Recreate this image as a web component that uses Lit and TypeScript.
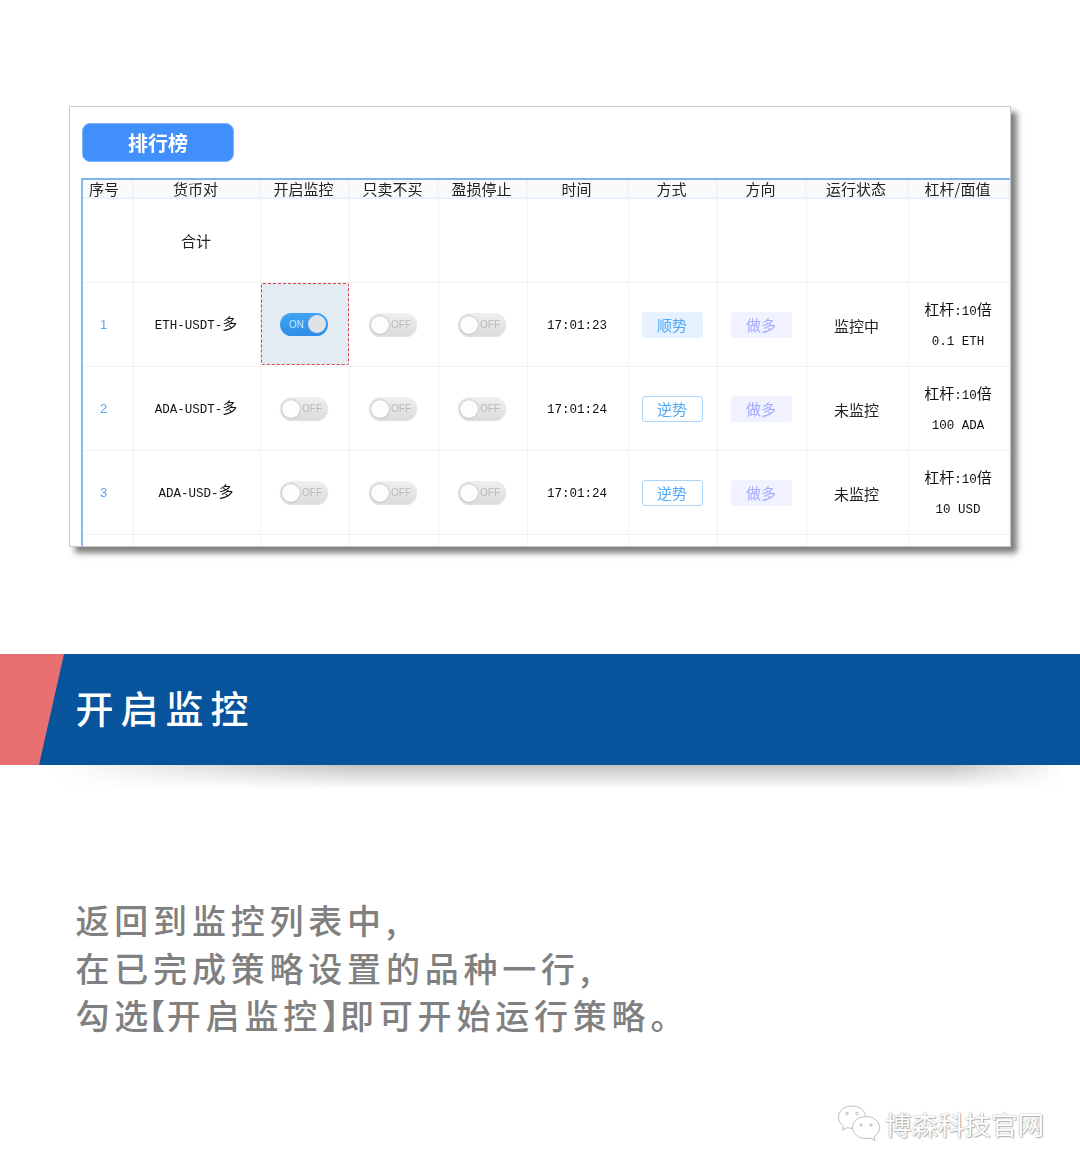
import { LitElement, html, css } from "lit";
import { customElement } from "lit/decorators.js";

const heads = ["序号", "货币对", "开启监控", "只卖不买", "盈损停止", "时间", "方式", "方向", "运行状态", "杠杆/面值"];
const rows = [
  { n: "1", pair: "ETH-USDT", on: true, time: "17:01:23", mode: "顺势", solid: true, state: "监控中", amount: "0.1 ETH" },
  { n: "2", pair: "ADA-USDT", on: false, time: "17:01:24", mode: "逆势", solid: false, state: "未监控", amount: "100 ADA" },
  { n: "3", pair: "ADA-USD", on: false, time: "17:01:24", mode: "逆势", solid: false, state: "未监控", amount: "10 USD" },
];

@customElement("app-root")
export class AppRoot extends LitElement {
  static styles = css`
    :host { display: block; width: 1080px; height: 1174px; overflow: hidden; background: #fff; padding-top: 106px; box-sizing: border-box; font-family: "Noto Sans CJK SC", "Liberation Sans", sans-serif; }
    .card { box-sizing: border-box; margin-left: 69px; width: 942px; height: 441px; border: 1px solid #c9c9c9; background: #fff; box-shadow: 6px 6px 6px #7d7d7d; overflow: hidden; padding: 16px 0 0 11px; }
    .inner { filter: blur(0.55px); }
    .btn { margin-left: 1px; width: 152px; height: 39px; border-radius: 8px; background: #418ffb; border: 1px solid #7fb3fa; box-sizing: border-box; color: #fff; font-size: 20px; font-weight: 700; display: flex; align-items: center; justify-content: center; }
    .table { margin-top: 16px; border-left: 2px solid #86bbf3; border-top: 2px solid #7fb5ef; }
    .row { display: grid; grid-template-columns: 51px 127px 89px 89px 89px 101px 89px 89px 102px 101px; height: 84px; border-bottom: 1px solid #f0f2f5; box-sizing: border-box; }
    .row.head { height: 19px; background: #fafafa; border-bottom: 2px solid #e9f2fb; font-size: 15px; color: #222; }
    .row.head .cell { border-right: 2px solid #eef4fb; line-height: 18px; padding-top: 0; }
    .row.head .cell:first-child { padding-right: 7px; }
    .row.blank { height: 12px; border-bottom: 0; }
    .cell { border-right: 1px solid #f0f2f5; box-sizing: border-box; display: flex; flex-direction: column; align-items: center; justify-content: center; font-size: 15px; color: #222; white-space: nowrap; min-width: 0; padding: 2px 2px 0 0; }
    .total { padding-bottom: 2px; }
    .num { color: #5aa5f5; font: 13px "Liberation Sans", sans-serif; padding: 0 7px 3px 0; }
    .mono { font-family: "Liberation Mono", monospace; font-size: 12.5px; color: #111; }
    .shift { padding-bottom: 7px; }
    .cjk { font-family: "Noto Sans CJK SC", sans-serif; font-size: 15px; }
    .hl { background: #e3ebf3; border: 1.5px dashed #e2434a; border-radius: 2px; margin: 0 1px 1px 0; }
    .sw { width: 48px; height: 23px; border-radius: 12px; position: relative; box-sizing: border-box; font: 10px "Liberation Sans", sans-serif; display: flex; align-items: center; margin-bottom: 2px; }
    .sw.off { background: linear-gradient(#efefef, #dcdcdc); color: #b9b9b9; padding-left: 22px; box-shadow: 0 1px 1px #ddd; }
    .sw.on { background: linear-gradient(#3da4f2, #2f8de8); color: #cfe8fb; padding-left: 9px; }
    .knob { position: absolute; top: 2.500px; width: 18px; height: 18px; border-radius: 50%; }
    .off .knob { left: 2px; background: #fdfdfd; box-shadow: 0 0 2px #999; }
    .on .knob { right: 2px; background: #dfe3e8; }
    .tag { width: 61px; height: 26px; border-radius: 3px; display: flex; align-items: center; justify-content: center; font-size: 15px; box-sizing: border-box; margin-bottom: 2px; }
    .tag.solid { background: #e6f3ff; color: #4ea8fa; }
    .tag.line { background: #fff; border: 1px solid #a9d5fb; color: #4ea8fa; }
    .tag.dir { background: #f0f2ff; color: #a3aafa; }
    .lev { display: flex; flex-direction: column; align-items: center; gap: 8px; line-height: 22px; }
    .banner { position: relative; margin-top: 107px; height: 111px; background: #07539c; display: flex; align-items: center; padding: 0 0 7px 75.500px; color: #fff; font-size: 38px; font-weight: 500; letter-spacing: 7px; box-sizing: border-box; }
    .banner::before { content: ""; position: absolute; left: 0; top: 0; bottom: 0; width: 64px; background: #e87071; clip-path: polygon(0 0, 100% 0, 39px 100%, 0 100%); }
    .banner::after { content: ""; position: absolute; top: 100%; left: 0; right: 0; height: 24px; background: linear-gradient(#c4c4c4, #ffffff00); -webkit-mask-image: linear-gradient(to right, transparent 50px, #000 350px, #000 950px, transparent 1065px); mask-image: linear-gradient(to right, transparent 50px, #000 350px, #000 950px, transparent 1065px); }
    .para { margin: 131px 0 0 75.500px; font-size: 34px; line-height: 47.500px; letter-spacing: 4.800px; color: #808080; font-weight: 500; white-space: nowrap; }
    .tight { letter-spacing: 0; }
    .lb { font-feature-settings: "halt"; letter-spacing: 1.500px; font-weight: 700; }
    .rb { font-feature-settings: "halt"; letter-spacing: 1px; font-weight: 700; }
    .mark { margin-top: 66px; display: flex; justify-content: flex-end; align-items: center; gap: 4px; padding-right: 36px; font-size: 26.500px; color: #fff; text-shadow: 0 0 1.500px #8a8a8a, 1px 1px 1px #bbb; font-weight: 400; line-height: 36px; }
    .mark svg { display: block; }
  `;

  sw(on: boolean) {
    return html`<div class="sw ${on ? "on" : "off"}">${on ? "ON" : "OFF"}<span class="knob"></span></div>`;
  }

  render() {
    return html`
      <div class="card">
        <div class="inner">
          <div class="btn">排行榜</div>
          <div class="table">
            <div class="row head">${heads.map((h) => html`<div class="cell">${h}</div>`)}</div>
            <div class="row">
              <div class="cell"></div><div class="cell total">合计</div>
              ${Array.from({ length: 8 }).map(() => html`<div class="cell"></div>`)}
            </div>
            ${rows.map((r) => html`
              <div class="row">
                <div class="cell"><span class="num">${r.n}</span></div>
                <div class="cell"><span class="mono shift">${r.pair}-<span class="cjk">多</span></span></div>
                <div class="cell ${r.on ? "hl" : ""}">${this.sw(r.on)}</div>
                <div class="cell">${this.sw(false)}</div>
                <div class="cell">${this.sw(false)}</div>
                <div class="cell"><span class="mono">${r.time}</span></div>
                <div class="cell"><div class="tag ${r.solid ? "solid" : "line"}">${r.mode}</div></div>
                <div class="cell"><div class="tag dir">做多</div></div>
                <div class="cell">${r.state}</div>
                <div class="cell"><div class="lev">
                  <span class="mono"><span class="cjk">杠杆</span>:10<span class="cjk">倍</span></span>
                  <span class="mono">${r.amount}</span>
                </div></div>
              </div>`)}
            <div class="row blank">${heads.map(() => html`<div class="cell"></div>`)}</div>
          </div>
        </div>
      </div>
      <div class="banner"><span>开启监控</span></div>
      <div class="para">
        <div>返回到监控列表中,</div>
        <div>在已完成策略设置的品种一行,</div>
        <div>勾<span class="tight">选</span><span class="lb">【</span>开启监控<span class="rb">】</span>即可开始运行策略。</div>
      </div>
      <div class="mark">
        <svg width="44" height="38" viewBox="0 0 44 38" fill="none" stroke="#bdbdbd" stroke-width="1">
          <path d="M15 1C7.500 1 1.500 6 1.500 12.300c0 3.600 2 6.600 5 8.700L5.500 25l4.800-2.400c1.600.4 3 .7 4.700.7.500 0 1 0 1.400-.1" fill="#fff"/>
          <path d="M15 1c7 0 13 4.500 13.500 10" />
          <circle cx="10" cy="8.500" r="1.300"/><circle cx="20" cy="8.500" r="1.300"/>
          <path d="M29 11.500c-7.500 0-13.500 4.800-13.500 11s6 11 13.500 11c1.500 0 3-.2 4.300-.6L38 35.500l-1-3.700c3.300-2 5.500-5.300 5.500-9.300 0-6.200-6-11-13.500-11z" fill="#fff"/>
          <circle cx="24" cy="20" r="1.200"/><circle cx="34" cy="20" r="1.200"/>
        </svg>
        <span>博森科技官网</span>
      </div>
    `;
  }
}
